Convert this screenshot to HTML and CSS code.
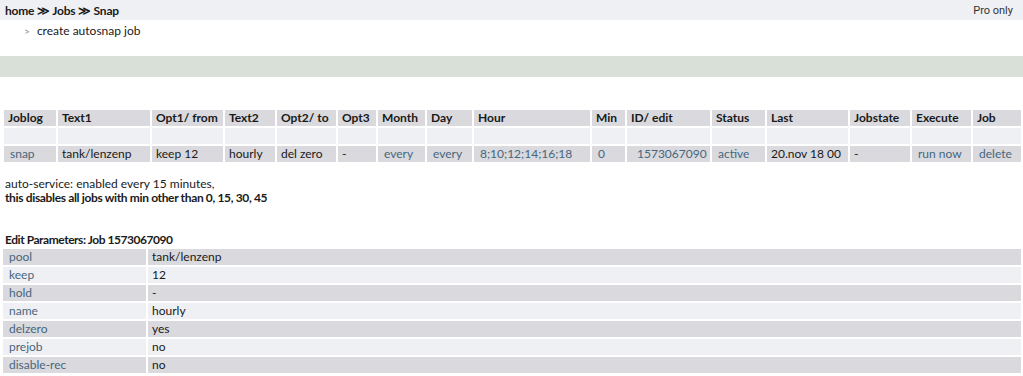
FILE: index.html
```html
<!DOCTYPE html>
<html lang="en">

<head>
    <meta charset="UTF-8">
    <meta name="viewport" content="width=device-width, initial-scale=1.0">
    <title>Jobs - Snap</title>
    <link rel="stylesheet" href="styles.css">
</head>

<body>

    <div class="topbar">
        <span class="crumbs"><a href="#">home</a> &#8811; <a href="#">Jobs</a> &#8811; <a href="#">Snap</a></span>
        <span class="pro">Pro only</span>
    </div>

    <div class="subnav">
        <span class="arrow">&gt;</span> <a href="#">create autosnap job</a>
    </div>

    <div class="greenbar"></div>

    <table class="jobs">
        <tr>
            <th class="c-joblog">Joblog</th>
            <th class="c-text1">Text1</th>
            <th class="c-opt1">Opt1/ from</th>
            <th class="c-text2">Text2</th>
            <th class="c-opt2">Opt2/ to</th>
            <th class="c-opt3">Opt3</th>
            <th class="c-month">Month</th>
            <th class="c-day">Day</th>
            <th class="c-hour">Hour</th>
            <th class="c-min">Min</th>
            <th class="c-id">ID/ edit</th>
            <th class="c-status">Status</th>
            <th class="c-last">Last</th>
            <th class="c-jobstate">Jobstate</th>
            <th class="c-exec">Execute</th>
            <th class="c-job">Job</th>
        </tr>
        <tr class="empty">
            <td></td><td></td><td></td><td></td><td></td><td></td><td></td><td></td>
            <td></td><td></td><td></td><td></td><td></td><td></td><td></td><td></td>
        </tr>
        <tr>
            <td><a href="#">snap</a></td>
            <td>tank/lenzenp</td>
            <td>keep 12</td>
            <td>hourly</td>
            <td>del zero</td>
            <td>-</td>
            <td><a href="#">every</a></td>
            <td><a href="#">every</a></td>
            <td><a href="#">8;10;12;14;16;18</a></td>
            <td><a href="#">0</a></td>
            <td><a href="#" class="id-link">1573067090</a></td>
            <td><a href="#">active</a></td>
            <td>20.nov 18 00</td>
            <td>-</td>
            <td><a href="#">run now</a></td>
            <td><a href="#">delete</a></td>
        </tr>
    </table>

    <p class="note">
        auto-service: enabled every 15 minutes,<br>
        <b>this disables all jobs with min other than 0, 15, 30, 45</b>
    </p>

    <h4 class="edit-title">Edit Parameters: Job 1573067090</h4>

    <table class="params">
        <tr><td class="key">pool</td><td>tank/lenzenp</td></tr>
        <tr><td class="key">keep</td><td>12</td></tr>
        <tr><td class="key">hold</td><td>-</td></tr>
        <tr><td class="key">name</td><td>hourly</td></tr>
        <tr><td class="key">delzero</td><td>yes</td></tr>
        <tr><td class="key">prejob</td><td>no</td></tr>
        <tr><td class="key">disable-rec</td><td>no</td></tr>
    </table>

</body>

</html>
```

FILE: styles.css
```css
body {
    font-family: Lato, "Noto Sans", sans-serif;
    font-size: 12px;
    color: #1a1a1a;
    margin: 0;
    padding: 0;
    background-color: #fff;
}

a {
    text-decoration: none;
}

.topbar {
    display: flex;
    justify-content: space-between;
    align-items: center;
    height: 20px;
    padding: 0 10px 0 5px;
    background-color: #eff0f4;
}

.crumbs {
    font-weight: bold;
    color: #1a1a1a;
    letter-spacing: -0.2px;
}

.crumbs a {
    color: #1a1a1a;
}

.pro {
    font-family: Roboto, sans-serif;
    font-size: 11px;
    color: #333;
}

.subnav {
    height: 36px;
    box-sizing: border-box;
    padding: 3px 0 0 24px;
    line-height: 16px;
}

.subnav .arrow {
    color: #888;
    font-size: 10px;
    margin-right: 4px;
}

.subnav a {
    color: #1a1a1a;
}

.greenbar {
    height: 21px;
    background-color: #d9e0d8;
}

table {
    border-spacing: 2px;
}

.jobs {
    table-layout: fixed;
    width: 1021px;
    margin: 31px 0 0 2px;
}

.jobs th,
.jobs td {
    box-sizing: border-box;
    height: 16px;
    padding: 0 0 0 4px;
    line-height: 16px;
    text-align: left;
    white-space: nowrap;
    overflow: hidden;
    background-color: #d9d9de;
}

.jobs .empty td {
    background-color: #eff0f4;
}

.jobs td a {
    color: #47667d;
    padding-left: 2px;
}

.jobs td a.id-link {
    padding-left: 6px;
}

.c-joblog { width: 52px; }
.c-text1 { width: 92px; }
.c-opt1 { width: 71px; }
.c-text2 { width: 50px; }
.c-opt2 { width: 59px; }
.c-opt3 { width: 38px; }
.c-month { width: 47px; }
.c-day { width: 45px; }
.c-hour { width: 116px; }
.c-min { width: 33px; }
.c-id { width: 83px; }
.c-status { width: 53px; }
.c-last { width: 81px; }
.c-jobstate { width: 60px; }
.c-exec { width: 59px; }
.c-job { width: 48px; }

.note {
    margin: 13px 0 0 5px;
    line-height: 14px;
}

.note b {
    letter-spacing: -0.35px;
}

.edit-title {
    margin: 28px 0 0 5px;
    font-size: 12px;
    line-height: 14px;
    letter-spacing: -0.45px;
}

.params {
    width: 1022px;
    margin: 0 0 0 1px;
}

.params td {
    height: 16px;
    padding: 0 0 0 4px;
    line-height: 16px;
    background-color: #eff0f4;
}

.params tr:nth-child(odd) td {
    background-color: #d9d9de;
}

.params td.key {
    width: 137px;
    padding-left: 6px;
    color: #47667d;
}
```
